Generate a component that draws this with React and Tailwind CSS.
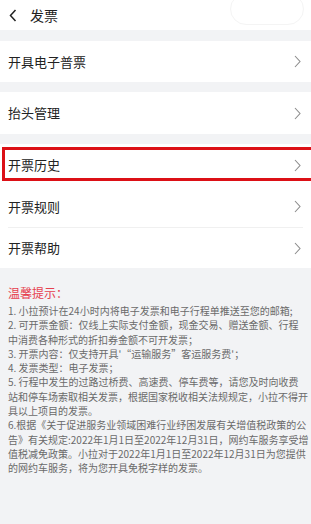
const font = { fontFamily: '"Noto Sans CJK SC", "Noto Sans", sans-serif' }

function Chevron() {
  return (
    <svg width="7" height="13" viewBox="0 0 7 13" className="shrink-0">
      <path d="M1 1 L6 6.5 L1 12" fill="none" stroke="#8c8c8c" strokeWidth="1.1" />
    </svg>
  )
}

function Row({ label, height = 'h-[41px]', children }) {
  return (
    <div className={`relative flex ${height} items-center justify-between bg-white pl-2 pr-[10px]`}>
      <span className="text-[13px] text-[#222]">{label}</span>
      <Chevron />
      {children}
    </div>
  )
}

const tips = [
  ['1. 小拉预计在24小时内将电子发票和电子行程单推送至您的邮箱;'],
  ['2. 可开票金额：仅线上实际支付金额，现金交易、赠送金额、行程', '中消费各种形式的折扣券金额不可开发票；'],
  ["3. 开票内容：仅支持开具'“运输服务”客运服务费'；"],
  ['4. 发票类型：电子发票；'],
  [
    '5. 行程中发生的过路过桥费、高速费、停车费等，请您及时向收费',
    '站和停车场索取相关发票，根据国家税收相关法规规定，小拉不得开',
    '具以上项目的发票。',
  ],
  [
    '6.根据《关于促进服务业领域困难行业纾困发展有关增值税政策的公',
    '告》有关规定:2022年1月1日至2022年12月31日，网约车服务享受增',
    '值税减免政策。小拉对于2022年1月1日至2022年12月31日为您提供',
    '的网约车服务，将为您开具免税字样的发票。',
  ],
]

export default function App() {
  return (
    <div className="relative min-h-[524px] w-[311px] overflow-hidden bg-[#f2f3f5]" style={font}>
      <div className="relative flex h-[30px] items-center bg-white">
        <svg width="8" height="13" viewBox="0 0 8 13" className="ml-[9px]">
          <path d="M6.5 1 L1.5 6.5 L6.5 12" fill="none" stroke="#222" strokeWidth="1.5" />
        </svg>
        <span className="ml-[13px] text-[14px] text-[#222]">发票</span>
        <div className="absolute left-[230px] top-[-7px] h-[32px] w-[74px] rounded-full border border-[#f4f4f4]" />
      </div>

      <div className="mt-[11px]">
        <Row label="开具电子普票" />
      </div>
      <div className="mt-[10px]">
        <Row label="抬头管理" height="h-[42px]" />
      </div>

      <div className="mt-[10px] bg-white">
        <Row label="开票历史" height="h-[42px]">
          <div className="absolute left-[2px] right-[-4px] top-[3px] h-[34px] border-[3px] border-[#dc1016]" />
        </Row>
        <Row label="开票规则" />
        <div className="mx-2 h-px bg-[#f0f0f0]" />
        <Row label="开票帮助" height="h-[40px]" />
      </div>

      <div className="px-2 pt-[17px]">
        <p className="text-[12px] leading-[16px] text-[#e63f4e]">温馨提示：</p>
        <div className="mt-[3px] text-[10px] leading-[14.3px] text-[#6a6a6a]">
          {tips.map((lines, i) => (
            <p key={i} className="whitespace-nowrap">
              {lines.map((l, j) => (
                <span key={j} className="block">
                  {l}
                </span>
              ))}
            </p>
          ))}
        </div>
      </div>
    </div>
  )
}
